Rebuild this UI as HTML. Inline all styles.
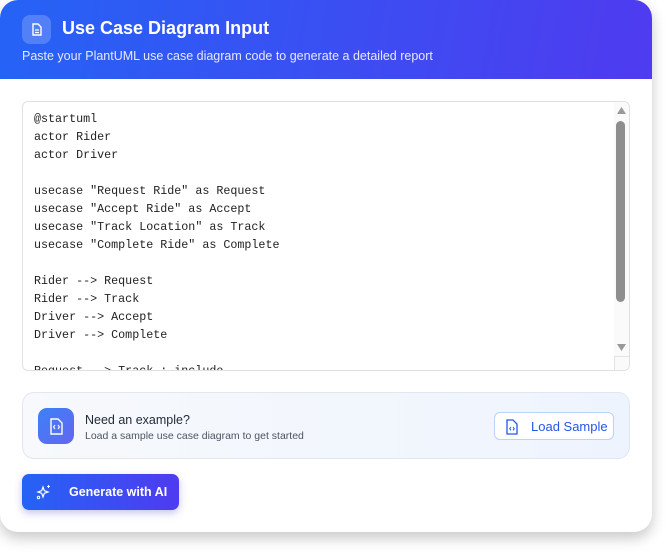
<!DOCTYPE html>
<html><head><style>
*{box-sizing:border-box;margin:0;padding:0}
body{width:667px;height:554px;background:#fff;font-family:"Liberation Sans",sans-serif;overflow:hidden;position:relative}
.card{position:absolute;left:0;top:0;width:652px;height:532px;border-radius:18px;background:#fff;box-shadow:0 6px 14px rgba(0,0,0,.22);overflow:hidden}
.hdr{height:79px;background:linear-gradient(100deg,#2563f5,#4f3bf0);position:relative;color:#fff}
.hicon{position:absolute;left:22px;top:15px;width:29px;height:29px;border-radius:8px;background:rgba(255,255,255,.2)}
.h1{position:absolute;left:62px;top:18px;font-size:18px;font-weight:bold}
.sub{position:absolute;left:22px;top:49px;font-size:12.5px;color:#e6e8ff}
.ta{position:absolute;left:22px;top:101px;width:608px;height:270px;border:1px solid #dde1e7;border-radius:6px;overflow:hidden;background:#fff}
pre{position:absolute;left:11px;top:8px;font-family:"Liberation Mono",monospace;font-size:11.7px;line-height:18px;color:#222}
.sb{position:absolute;right:0;top:0;width:15px;height:100%;background:#fafafa}
.th{position:absolute;left:2px;top:19px;width:9px;height:181px;border-radius:5px;background:#8e8e8e}
.ex{position:absolute;left:22px;top:392px;width:608px;height:67px;border:1px solid #e1e7f0;border-radius:12px;background:linear-gradient(90deg,#f7f9fc,#eef4fe)}
.exi{position:absolute;left:15px;top:15px;width:36px;height:36px;border-radius:9px;background:linear-gradient(135deg,#3b82f6,#6366f1)}
.t1{position:absolute;left:62px;top:20px;font-size:12.5px;color:#1f2937}
.t2{position:absolute;left:62px;top:37px;font-size:10.5px;color:#4b5563}
.ls{position:absolute;left:471px;top:19px;width:120px;height:28px;border:1px solid #bcd2fb;border-radius:6px;background:#fff;color:#2457e6;font-size:13px}
.gen{position:absolute;left:22px;top:474px;width:157px;height:36px;border-radius:7px;background:linear-gradient(90deg,#2563f5,#4f3bf0);color:#fff;font-size:12.5px;font-weight:bold;box-shadow:0 3px 8px rgba(60,60,200,.3)}
</style></head><body>
<div class="card">
<div class="hdr">
<div class="hicon"><svg width="29" height="29" viewBox="0 0 29 29"><path d="M11 9h5l3 3v8h-8z" fill="none" stroke="#fff" stroke-width="1.4"/><path d="M13 15h4M13 17.5h4" stroke="#fff" stroke-width="1.2"/></svg></div>
<div class="h1">Use Case Diagram Input</div>
<div class="sub">Paste your PlantUML use case diagram code to generate a detailed report</div>
</div>
<div class="ta"><pre>@startuml
actor Rider
actor Driver

usecase "Request Ride" as Request
usecase "Accept Ride" as Accept
usecase "Track Location" as Track
usecase "Complete Ride" as Complete

Rider --> Request
Rider --> Track
Driver --> Accept
Driver --> Complete

Request ..> Track : include</pre>
<div class="sb"><svg style="position:absolute;left:3px;top:5px" width="9" height="7"><path d="M0 7L4.5 0L9 7z" fill="#999"/></svg><div class="th"></div><svg style="position:absolute;left:3px;top:242px" width="9" height="7"><path d="M0 0L4.5 7L9 0z" fill="#999"/></svg><div style="position:absolute;left:0;top:254px;width:15px;height:15px;border-top:1px solid #e3e3e3;border-left:1px solid #e3e3e3"></div></div>
</div>
<div class="ex">
<div class="exi"><svg width="36" height="36" viewBox="0 0 36 36"><path d="M13 11h7l4 4v11H13z" fill="none" stroke="#fff" stroke-width="1.4"/><path d="M17 17l-1.5 2 1.5 2M20 17l1.5 2-1.5 2" fill="none" stroke="#fff" stroke-width="1.1"/></svg></div>
<div class="t1">Need an example?</div>
<div class="t2">Load a sample use case diagram to get started</div>
<div class="ls"><svg style="position:absolute;left:10px;top:6px" width="14" height="16" viewBox="0 0 14 16"><path d="M2 1h6l4 4v10H2z" fill="none" stroke="#2457e6" stroke-width="1.3"/><path d="M6 8l-1.3 1.7L6 11.4M8 8l1.3 1.7L8 11.4" fill="none" stroke="#2457e6" stroke-width="1"/></svg><span style="position:absolute;left:36px;top:6px">Load Sample</span></div>
</div>
<div class="gen"><svg style="position:absolute;left:14px;top:10px" width="16" height="16" viewBox="0 0 16 16"><path d="M7 3l1.3 3.7L12 8l-3.7 1.3L7 13l-1.3-3.7L2 8l3.7-1.3z" fill="none" stroke="#fff" stroke-width="1.2"/><path d="M12.5 1v3M11 2.5h3" stroke="#fff" stroke-width="1"/><circle cx="2.5" cy="13.5" r="1.2" fill="none" stroke="#fff"/></svg><span style="position:absolute;left:47px;top:11px">Generate with AI</span></div>
</div>
</body></html>
